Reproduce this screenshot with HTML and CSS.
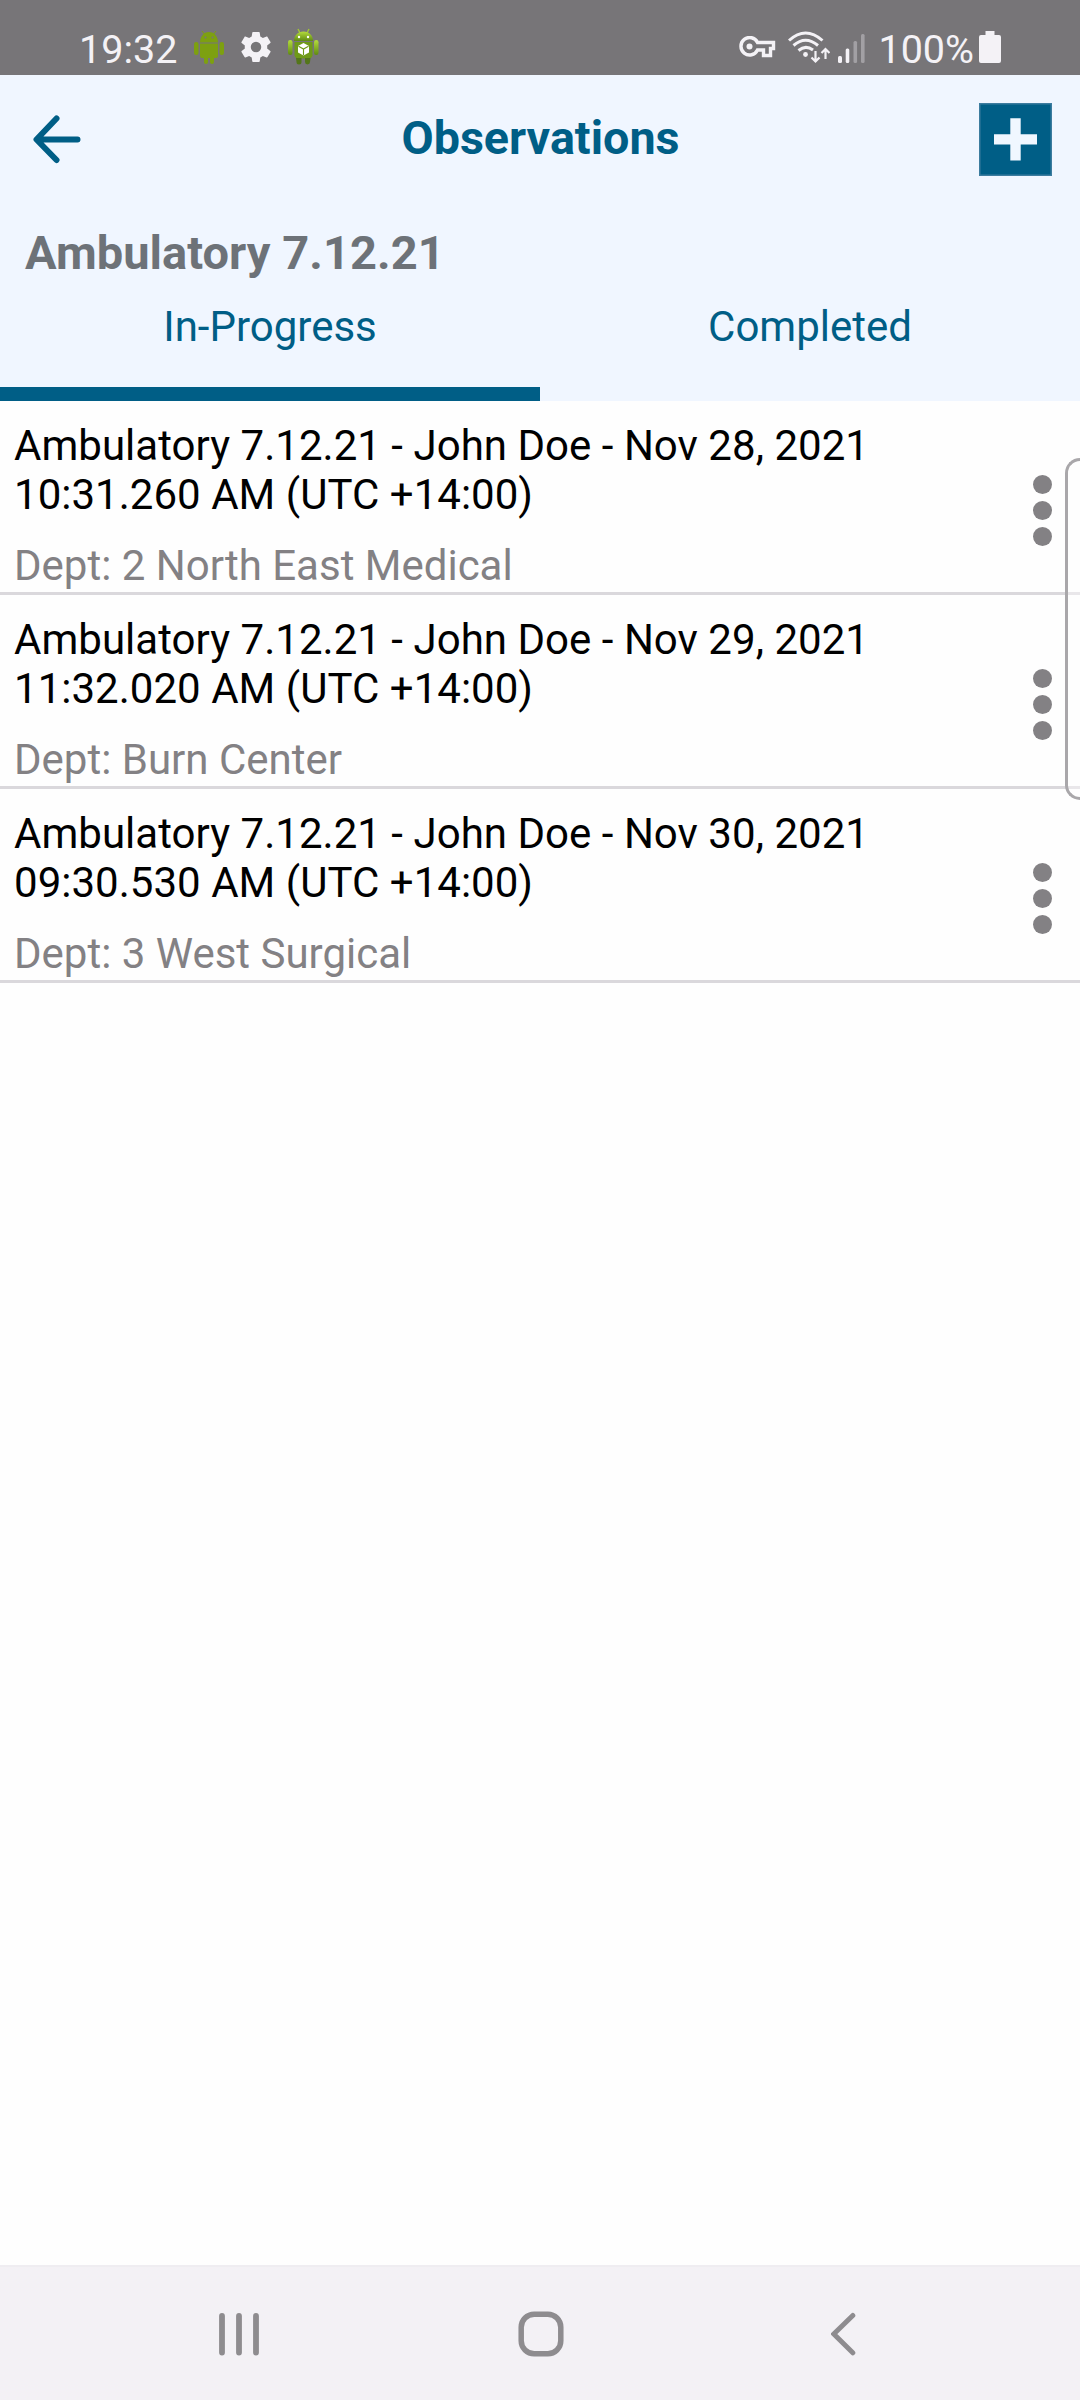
FILE: index.html
```html
<!DOCTYPE html>
<html lang="en">
<head>
    <meta charset="UTF-8">
    <meta name="viewport" content="width=device-width, initial-scale=1.0">
    <title>Observations</title>
    <link rel="stylesheet" href="styles.css">
</head>
<body>

<div class="status-bar">
    <span class="time">19:32</span>
    <svg class="icon-android" width="30" height="34" viewBox="0 0 30 34" fill="#7da010">
        <path d="M6 11.5C6 6 9.500 1 15 1s9 5 9 10.500z"/>
        <path d="M8 0l3 4M22 0l-3 4" stroke="#7da010" stroke-width="1"/>
        <path d="M6 12.500h18V25a2 2 0 0 1-2 2h-2v4a2 2 0 0 1-4 0v-4h-2v4a2 2 0 0 1-4 0v-4H8a2 2 0 0 1-2-2z"/>
        <rect x="0" y="11" width="4.500" height="13" rx="2.200"/>
        <rect x="25.500" y="11" width="4.500" height="13" rx="2.200"/>
        <circle cx="11.500" cy="6.500" r="1" fill="#777578"/>
        <circle cx="18.500" cy="6.500" r="1" fill="#777578"/>
    </svg>
    <svg class="icon-gear" width="36" height="36" viewBox="0 0 24 24" fill="#f4f2f6">
        <path d="M19.430 12.980c.040-.320.070-.640.070-.980s-.030-.660-.070-.980l2.110-1.650c.190-.150.240-.420.120-.640l-2-3.460c-.120-.220-.390-.300-.610-.220l-2.490 1c-.520-.400-1.080-.730-1.690-.980l-.380-2.650A.488.488 0 0 0 14 2h-4c-.250 0-.460.180-.490.420l-.380 2.650c-.610.250-1.170.590-1.690.980l-2.490-1c-.230-.090-.490 0-.610.220l-2 3.460c-.130.220-.070.490.120.640l2.110 1.650c-.040.320-.070.650-.070.980s.030.660.070.980l-2.110 1.650c-.190.150-.240.420-.120.640l2 3.460c.120.220.390.300.610.220l2.490-1c.520.400 1.080.730 1.690.980l.380 2.650c.030.240.240.420.490.420h4c.250 0 .460-.180.490-.420l.380-2.650c.610-.250 1.170-.590 1.690-.980l2.490 1c.230.090.490 0 .610-.220l2-3.460c.120-.220.070-.490-.120-.640zM12 15.500a3.500 3.500 0 1 1 0-7 3.500 3.500 0 0 1 0 7z"/>
    </svg>
    <svg class="icon-robot" width="32" height="38" viewBox="0 0 32 38">
        <defs>
            <linearGradient id="green" x1="0" y1="0" x2="0" y2="1">
                <stop offset="0" stop-color="#b4dc3c"/>
                <stop offset="1" stop-color="#5f8a12"/>
            </linearGradient>
        </defs>
        <path d="M11 1l2.500 5M22 1l-2.500 5" stroke="#a4cc30" stroke-width="1.300"/>
        <path d="M7 13C7 7.500 11 3.500 16.500 3.500S26 7.500 26 13z" fill="url(#green)"/>
        <path d="M7.500 14h18v13.500a4 4 0 0 1-4 3h-10a4 4 0 0 1-4-3z" fill="#6f9a18"/>
        <rect x="1" y="12" width="4.500" height="15" rx="2.200" fill="url(#green)"/>
        <rect x="27" y="12" width="4.500" height="15" rx="2.200" fill="url(#green)"/>
        <path d="M9 30h5.500v4a2.500 2.500 0 0 1-5 0zM18 30h5.500l-.5 4a2.500 2.500 0 0 1-5 0z" fill="#54761a"/>
        <circle cx="12" cy="9" r="1.200" fill="#fff"/>
        <circle cx="21" cy="9" r="1.200" fill="#fff"/>
        <path d="M16.500 15l5.500 3v6.500l-5.500 3-5.500-3V18z" fill="#fff"/>
        <path d="M11.500 18.300l5 2.700 5-2.700M16.500 21v6" fill="none" stroke="#6f9a18" stroke-width="1.100"/>
    </svg>
    <div class="status-right">
        <svg class="icon-key" width="37" height="22" viewBox="0 0 37 22" fill="none" stroke="#f4f2f6">
            <path d="M18.500 6.500H34.500V12.500H31.500V19.500H24.500V14H18.500A8.700 8.700 0 1 1 18.500 6.500z" stroke-width="3.400"/>
            <circle cx="10.500" cy="10.500" r="3" fill="#f4f2f6" stroke="none"/>
        </svg>
        <svg class="icon-wifi" width="42" height="33" viewBox="0 0 42 33" fill="none" stroke="#f4f2f6" stroke-width="3">
            <path d="M1 9.500Q17.500-5.500 34.500 9.500"/>
            <path d="M5.500 14.500Q17.500 4 30 14.500"/>
            <path d="M10.500 19.500Q17.500 13.500 25 19"/>
            <circle cx="17.500" cy="23.500" r="2.400" fill="#f4f2f6" stroke="none"/>
            <path d="M27.500 20v10M23.500 26.500l4 4 4-4M37.500 28V18M33.500 22l4-4 4 4" stroke-width="2.200"/>
        </svg>
        <svg class="icon-signal" width="28" height="29" viewBox="0 0 28 29" fill="#f4f2f6">
            <rect x="0" y="22" width="4" height="7" rx="1.500"/>
            <rect x="7.700" y="14.500" width="3.600" height="14.500" rx="1.500"/>
            <rect x="15.500" y="7" width="3.600" height="22" rx="1.500" opacity=".35"/>
            <rect x="23" y="0" width="3.600" height="29" rx="1.500" opacity=".35"/>
        </svg>
        <span class="percent">100%</span>
        <svg class="icon-battery" width="22" height="32" viewBox="0 0 22 32" fill="#f4f2f6">
            <path d="M6.500 0h9v4H20a2 2 0 0 1 2 2v24a2 2 0 0 1-2 2H2a2 2 0 0 1-2-2V6a2 2 0 0 1 2-2h4.500z"/>
        </svg>
    </div>
</div>

<header class="header">
    <div class="toolbar">
        <svg class="back" width="48" height="50" viewBox="0 0 48 50" fill="none" stroke="#005e86" stroke-width="6" stroke-linecap="round" stroke-linejoin="round">
            <path d="M44.500 25.500H4M23.500 4.500L3.500 25.500l20 20.500"/>
        </svg>
        <h1>Observations</h1>
        <svg class="add" width="73" height="73" viewBox="0 0 73 73">
            <rect width="73" height="73" fill="#3c7c9f"/>
            <rect x="1.500" y="1.500" width="70" height="70" fill="#005e86"/>
            <path d="M31.300 15.300h10.400v15.900H58v10.400H41.700v16H31.300v-16H15V31.200h16.300z" fill="#f0f7ff"/>
        </svg>
    </div>
    <h2>Ambulatory 7.12.21</h2>
    <div class="tabs">
        <div class="tab active">In-Progress</div>
        <div class="tab">Completed</div>
    </div>
</header>

<main class="list">
    <div class="item">
        <div class="item-text">
            <div class="name">Ambulatory 7.12.21 - John Doe - Nov 28, 2021<br>10:31.260 AM (UTC +14:00)</div>
            <div class="dept">Dept: 2 North East Medical</div>
        </div>
        <div class="menu"><i></i><i></i><i></i></div>
    </div>
    <div class="item">
        <div class="item-text">
            <div class="name">Ambulatory 7.12.21 - John Doe - Nov 29, 2021<br>11:32.020 AM (UTC +14:00)</div>
            <div class="dept">Dept: Burn Center</div>
        </div>
        <div class="menu"><i></i><i></i><i></i></div>
    </div>
    <div class="item">
        <div class="item-text">
            <div class="name">Ambulatory 7.12.21 - John Doe - Nov 30, 2021<br>09:30.530 AM (UTC +14:00)</div>
            <div class="dept">Dept: 3 West Surgical</div>
        </div>
        <div class="menu"><i></i><i></i><i></i></div>
    </div>
    <div class="edge-handle"></div>
</main>

<nav class="nav-bar">
    <svg width="40" height="46" viewBox="0 0 40 46" stroke="#8e8c8f" stroke-width="5.800" stroke-linecap="round">
        <path d="M3 5v36.500M20 5v36.500M37 5v36.500"/>
    </svg>
    <svg class="home" width="46" height="46" viewBox="0 0 46 46" fill="none" stroke="#8e8c8f" stroke-width="5.500">
        <rect x="3.200" y="3.200" width="39.600" height="39.600" rx="13"/>
    </svg>
    <svg width="26" height="46" viewBox="0 0 26 46" fill="none" stroke="#8e8c8f" stroke-width="5" stroke-linecap="round">
        <path d="M21.800 4.500L2.800 23l19 18.800"/>
    </svg>
</nav>

</body>
</html>
```
FILE: styles.css
```css
* {
    box-sizing: border-box;
}
body {
    font-family: Roboto, "Liberation Sans", sans-serif;
    display: flex;
    flex-direction: column;
    height: 2400px;
    margin: 0;
    background: #fefefe;
}
.status-bar {
    display: flex;
    align-items: flex-start;
    height: 75px;
    padding-left: 79px;
    padding-right: 79px;
    background: #777578;
    color: #f4f2f6;
    font-size: 39.5px;
    line-height: 46px;
}
.time,
.percent {
    margin-top: 27px;
}
.icon-android {
    margin: 31px 0 0 17px;
}
.icon-gear {
    margin: 29px 0 0 14px;
}
.icon-robot {
    margin: 28px 0 0 13px;
}
.status-right {
    display: flex;
    margin-left: auto;
}
.icon-key {
    margin-top: 36px;
}
.icon-wifi {
    margin: 31px 0 0 12px;
}
.icon-signal {
    margin: 34px 0 0 8px;
}
.percent {
    margin-left: 12px;
}
.icon-battery {
    margin: 31px 0 0 5px;
}
.header {
    height: 326px;
    background: #f0f6ff;
    color: #005e86;
}
.toolbar {
    display: flex;
    align-items: center;
    justify-content: space-between;
    height: 128px;
    padding: 0 28px 0 33px;
}
h1,
h2 {
    margin: 0;
    font-weight: 700;
}
h1 {
    margin: -2px 0 0 21px;
    font-size: 46.7px;
    line-height: 56px;
}
h2 {
    height: 84px;
    padding: 22px 0 0 25px;
    color: #6d7278;
    font-size: 47px;
    line-height: 55px;
    letter-spacing: 0.05px;
}
.tabs {
    display: flex;
    height: 114px;
}
.tab {
    flex: 1;
    padding-top: 15px;
    border-bottom: 14px solid transparent;
    font-size: 42px;
    line-height: 49px;
    text-align: center;
}
.tab.active {
    border-bottom-color: #005e86;
}
.list {
    position: relative;
    flex: 1;
}
.item {
    display: flex;
    justify-content: space-between;
    height: 194px;
    padding: 20px 28px 0 14px;
    border-bottom: 3px solid #dad8dc;
    font-size: 42px;
    line-height: 49px;
}
.name {
    color: #000;
    letter-spacing: 0.03px;
}
.dept {
    margin-top: 22px;
    color: #838184;
}
.menu {
    display: flex;
    flex-direction: column;
    gap: 7px;
    margin-top: 54px;
}
.menu i {
    width: 19px;
    height: 19px;
    border-radius: 50%;
    background: #838184;
}
/* edge panel handle, runs off the right side */
.edge-handle {
    position: absolute;
    top: 57px;
    right: 0;
    width: 15px;
    height: 342px;
    border: 3px solid #a9a7aa;
    border-right: 0;
    border-radius: 15px 0 0 15px;
    background: rgba(255, 255, 255, 0.4);
}
.nav-bar {
    display: flex;
    align-items: center;
    justify-content: space-between;
    height: 135px;
    padding: 0 223px 0 219px;
    border-top: 2px solid #efedf1;
    background: #f3f1f5;
}
.home {
    margin-right: 8px;
}
```
